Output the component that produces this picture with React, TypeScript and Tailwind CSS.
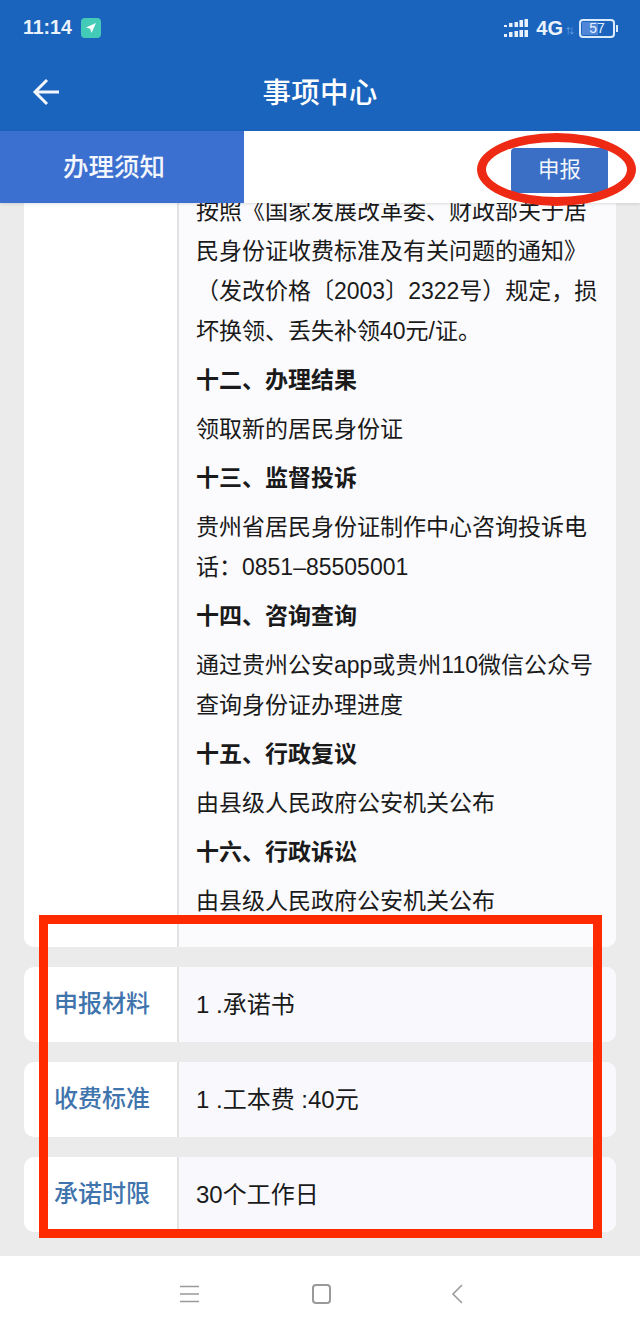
import { Fragment } from "react";

const CJK = "font-['Liberation_Sans','Noto_Sans_CJK_SC',sans-serif]";

type Block = { heading?: boolean; lines: string[] };

const notice: Block[] = [
  {
    lines: [
      "按照《国家发展改革委、财政部关于居",
      "民身份证收费标准及有关问题的通知》",
      "（发改价格〔2003〕2322号）规定，损",
      "坏换领、丢失补领40元/证。",
    ],
  },
  { heading: true, lines: ["十二、办理结果"] },
  { lines: ["领取新的居民身份证"] },
  { heading: true, lines: ["十三、监督投诉"] },
  { lines: ["贵州省居民身份证制作中心咨询投诉电", "话：0851–85505001"] },
  { heading: true, lines: ["十四、咨询查询"] },
  { lines: ["通过贵州公安app或贵州110微信公众号", "查询身份证办理进度"] },
  { heading: true, lines: ["十五、行政复议"] },
  { lines: ["由县级人民政府公安机关公布"] },
  { heading: true, lines: ["十六、行政诉讼"] },
  { lines: ["由县级人民政府公安机关公布"] },
];

const rows = [
  { label: "申报材料", value: "1 .承诺书" },
  { label: "收费标准", value: "1 .工本费 :40元" },
  { label: "承诺时限", value: "30个工作日" },
];

function SignalIcon() {
  return (
    <svg width="24" height="19" viewBox="0 0 24 19" fill="#e8f1fb">
      <rect x="0" y="6" width="3" height="2" />
      <rect x="5" y="4" width="3.5" height="4" />
      <rect x="10.5" y="3" width="3.5" height="5" />
      <rect x="15.5" y="1" width="3.5" height="7" />
      <rect x="20.5" y="0" width="3.5" height="8" />
      <rect x="0" y="15" width="3" height="3" />
      <rect x="5" y="13" width="3.5" height="5" />
      <rect x="10.5" y="12" width="3.5" height="6" />
      <rect x="15.5" y="11" width="3.5" height="7" />
      <rect x="20.5" y="11" width="3.5" height="7" />
    </svg>
  );
}

export default function App() {
  return (
    <div className={`relative w-[640px] h-[1332px] overflow-hidden flex flex-col bg-[#ebebeb] ${CJK}`}>
      <header className="h-[131px] shrink-0 bg-[#1b64bd] text-white">
        <div className="h-[56px] flex items-center justify-between pl-[23px] pr-[22px]">
          <div className="flex items-center gap-[9px]">
            <span className="text-[19.5px] font-bold text-[#eaf2fb]">11:14</span>
            <span className="w-[20px] h-[20px] rounded-[4px] bg-[#43cbb8] flex items-center justify-center">
              <svg width="12" height="12" viewBox="0 0 12 12" fill="#fff">
                <polygon points="11,1 1,5.5 5.2,6.8 6.5,11" />
              </svg>
            </span>
          </div>
          <div className="flex items-center">
            <SignalIcon />
            <span className="ml-[8px] text-[20px] font-bold text-[#eaf2fb]">4G</span>
            <span className="ml-[3px] mt-[8px] text-[8px] leading-none text-[#6fa8e8]">⇅</span>
            <div className="ml-[5px] relative w-[36px] h-[19px] rounded-[4px] border-2 border-[#dcebfa] overflow-hidden flex items-center justify-center">
              <div className="absolute left-[1px] top-[1px] bottom-[1px] w-[16px] bg-[#4f86d8]" />
              <span className="relative text-[14px] leading-none font-medium text-[#e8f1fb]">57</span>
            </div>
            <div className="ml-[1px] w-[2px] h-[7px] bg-[#dcebfa]" />
          </div>
        </div>
        <div className="relative h-[75px] flex items-center justify-center">
          <svg
            width="28"
            height="28"
            viewBox="0 0 28 28"
            fill="none"
            stroke="#f2f6fc"
            strokeWidth="3"
            className="absolute left-[32px] top-[22px]"
          >
            <path d="M27 14H3M15 2L3 14L15 26" />
          </svg>
          <h1 className="text-[28.5px] font-medium tracking-[0.3px]">事项中心</h1>
        </div>
      </header>

      <div className="relative z-10 h-[72px] shrink-0 flex items-center justify-between bg-white shadow-[0_1px_3px_rgba(0,0,0,0.12)]">
        <div className="w-[244px] h-full bg-[#3b6fd0] flex items-center pl-[63px] text-[25.5px] font-medium text-[#f3f6fc]">
          办理须知
        </div>
        <button className="mr-[32px] mt-[7px] w-[97px] h-[45px] rounded-[4px] bg-[#3b6fc6] text-[#f3f6fc] text-[21.5px]">
          申报
        </button>
      </div>

      <main className="flex-1 overflow-hidden px-[24px]">
        <section className="-mt-[12px] h-[756px] flex rounded-[10px] overflow-hidden bg-white">
          <div className="w-[155px] shrink-0 border-r-2 border-[#e2e2e2]" />
          <div className="flex-1 bg-[#fbfbfe] pl-[17px] text-[23px] leading-[40px] text-[#1a1a1a]">
            {notice.map((block, i) => (
              <div key={i} className={`mb-[9px] whitespace-nowrap ${block.heading ? "font-bold" : ""}`}>
                {block.lines.map((line, j) => (
                  <Fragment key={j}>
                    {line}
                    {j < block.lines.length - 1 && <br />}
                  </Fragment>
                ))}
              </div>
            ))}
          </div>
        </section>

        <div className="mt-[20px] flex flex-col gap-[20px]">
          {rows.map((row) => (
            <div key={row.label} className="h-[75px] flex rounded-[10px] overflow-hidden bg-white">
              <div className="w-[155px] shrink-0 border-r-2 border-[#e2e2e2] pl-[30px] flex items-center text-[24px] font-medium text-[#3f74ad]">
                <span className="-mt-[2px]">{row.label}</span>
              </div>
              <div className="flex-1 bg-[#f9f9fd] pl-[17px] flex items-center text-[24px] text-[#1a1a1a]">
                {row.value}
              </div>
            </div>
          ))}
        </div>
      </main>

      <nav className="h-[76px] shrink-0 bg-white flex items-center pl-[180px]">
        <svg width="19" height="18" viewBox="0 0 19 18" stroke="#9a9a9a" strokeWidth="1.6">
          <path d="M0 1.5H19M0 9H19M0 16.5H19" />
        </svg>
        <div className="ml-[113px] w-[19px] h-[20px] rounded-[4px] border-2 border-[#999]" />
        <svg width="12" height="20" viewBox="0 0 12 20" fill="none" stroke="#9a9a9a" strokeWidth="1.6" className="ml-[120px]">
          <path d="M11 1L2 10L11 19" />
        </svg>
      </nav>

      {/* red marks drawn over the screenshot */}
      <div className="absolute z-20 left-[477px] top-[133px] w-[159px] h-[73px] rounded-[50%] border-[9px] border-[#ee2a14]" />
      <div className="absolute z-20 left-[39px] top-[915px] w-[563px] h-[323px] border-[9px] border-[#ff2a00]" />
    </div>
  );
}
